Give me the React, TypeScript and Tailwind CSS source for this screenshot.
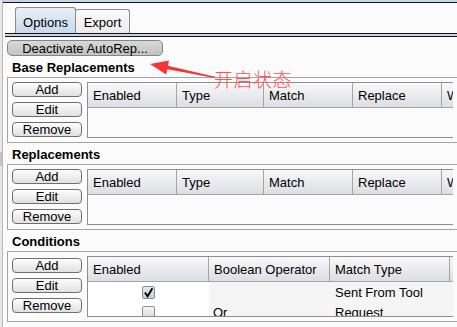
import React from "react";

function Btn({ label }: { label: string }) {
  return (
    <div className="h-[15px] w-[70px] shrink-0 rounded-[4px] border border-[#6f6f6f] bg-gradient-to-b from-[#fefefe] to-[#e0e0e0] flex items-center justify-center text-[13px] leading-none text-black">
      {label}
    </div>
  );
}

function ButtonCol() {
  return (
    <div className="flex flex-col gap-[5px] w-[70px] shrink-0">
      <Btn label="Add" />
      <Btn label="Edit" />
      <Btn label="Remove" />
    </div>
  );
}

function HCell({ w, children }: { w: string; children: React.ReactNode }) {
  return (
    <div className={`${w} shrink-0 border-r border-[#a3a3a8] pl-[5px] flex items-center whitespace-nowrap text-[13px] leading-none`}>
      {children}
    </div>
  );
}

function ReplTable() {
  return (
    <div className="flex-1 min-w-0 h-[56px] flex flex-col border border-r-0 border-[#8e8e8e] overflow-hidden">
      <div className="h-[25px] shrink-0 flex border-b border-[#a3a3a8] bg-gradient-to-b from-[#f8f8fa] to-[#dddee3]">
        <HCell w="w-[89px]">Enabled</HCell>
        <HCell w="w-[87px]">Type</HCell>
        <HCell w="w-[89px]">Match</HCell>
        <HCell w="w-[89px]">Replace</HCell>
        <div className="flex-1 pl-[5px] flex items-center whitespace-nowrap text-[13px] leading-none">Which</div>
      </div>
      <div className="flex-1 bg-[#fbfbfb]" />
    </div>
  );
}

function CheckBox({ checked }: { checked: boolean }) {
  return (
    <div
      className={`w-[13px] h-[13px] rounded-[2px] border border-[#8a8f96] flex items-center justify-center ${
        checked ? "bg-gradient-to-b from-[#e4ebf2] to-[#c2cfdc]" : "bg-gradient-to-b from-[#f6f6f6] to-[#dadada]"
      }`}
    >
      {checked && (
        <svg width="11" height="11" viewBox="0 0 11 11">
          <path d="M2 5.5 L4.6 9.2 L9.4 1.2" fill="none" stroke="#000" strokeWidth="1.9" strokeLinejoin="miter" />
        </svg>
      )}
    </div>
  );
}

function CondTable() {
  return (
    <div className="flex-1 min-w-0 h-[61px] flex flex-col border border-r-0 border-[#8e8e8e] overflow-hidden">
      <div className="h-[25px] shrink-0 flex border-b border-[#a3a3a8] bg-gradient-to-b from-[#f8f8fa] to-[#dddee3]">
        <HCell w="w-[121px]">Enabled</HCell>
        <HCell w="w-[121px]">Boolean Operator</HCell>
        <HCell w="w-[120px]">Match Type</HCell>
        <div className="flex-1 pl-[5px] flex items-center whitespace-nowrap text-[13px] leading-none">Match Relationship</div>
      </div>
      <div className="flex-1 flex flex-col overflow-hidden text-[13px] leading-none">
        <div className="h-[20px] shrink-0 flex">
          <div className="w-[121px] shrink-0 bg-white flex items-center justify-center">
            <CheckBox checked />
          </div>
          <div className="w-[121px] shrink-0 bg-[#f5f5f5] pl-[4px] flex items-center" />
          <div className="w-[120px] shrink-0 bg-[#f5f5f5] pl-[5px] flex items-center whitespace-nowrap">Sent From Tool</div>
          <div className="flex-1 bg-[#f5f5f5] pl-[5px] flex items-center whitespace-nowrap">Matches</div>
        </div>
        <div className="h-[20px] shrink-0 flex">
          <div className="w-[121px] shrink-0 bg-white flex items-center justify-center">
            <CheckBox checked={false} />
          </div>
          <div className="w-[121px] shrink-0 bg-[#f5f5f5] pl-[4px] flex items-center">Or</div>
          <div className="w-[120px] shrink-0 bg-[#f5f5f5] pl-[5px] flex items-center whitespace-nowrap">Request</div>
          <div className="flex-1 bg-[#f5f5f5] pl-[5px] flex items-center whitespace-nowrap">Contains</div>
        </div>
      </div>
    </div>
  );
}

function Label({ children }: { children: React.ReactNode }) {
  return (
    <div className="h-[21px] shrink-0 pl-[5px] pt-[4px] text-[13px] leading-[15px] font-bold whitespace-nowrap">
      {children}
    </div>
  );
}

export default function App() {
  return (
    <div className="relative w-[457px] h-[327px] overflow-hidden bg-[#fbfbfb] flex font-['Liberation_Sans',Arial,sans-serif] text-black">
      {/* left strip */}
      <div className="w-[2px] shrink-0 bg-[#e8e8e8] flex flex-col">
        <div className="h-[152px]" />
        <div className="h-[14px] bg-[#c4c4c4]" />
      </div>
      <div className="w-px shrink-0 bg-[#b8b8b8]" />

      <div className="flex-1 min-w-0 flex flex-col">
        <div className="h-[2px] shrink-0 bg-[#c5d6ea]" />
        <div className="h-px shrink-0 bg-[#111]" />

        {/* tabs */}
        <div className="h-[30px] shrink-0 flex items-end pl-[12px]">
          <div className="w-[61px] h-[26px] rounded-t-[3px] border border-b-0 border-[#898c95] bg-gradient-to-b from-[#e8eff8] to-[#c8d9ec] flex justify-center items-center pt-[3px] text-[13px] leading-none">
            Options
          </div>
          <div className="-ml-px w-[55px] h-[24px] rounded-t-[3px] border border-b-0 border-[#898c95] bg-gradient-to-b from-[#fbfbfb] to-[#ebebeb] flex justify-center items-center pt-[1px] text-[13px] leading-none">
            Export
          </div>
        </div>

        <div className="ml-[2px] h-px shrink-0 bg-[#111]" />
        <div className="ml-[2px] h-[2px] shrink-0 bg-[#c5d6ea]" />
        <div className="ml-[2px] h-px shrink-0 bg-[#111]" />

        <div className="pl-[4px] pt-[3px] flex flex-col">
          <div className="w-[156px] h-[16px] shrink-0 rounded-[5px] border border-[#858585] bg-gradient-to-b from-[#d8d8d8] to-[#c2c2c2] flex items-center justify-center text-[13px] leading-none whitespace-nowrap">
            Deactivate AutoRep...
          </div>

          <Label>Base Replacements</Label>
          <div className="flex gap-[5px] border border-r-0 border-[#a3a3a3] p-[4px]">
            <ButtonCol />
            <ReplTable />
          </div>

          <Label>Replacements</Label>
          <div className="flex gap-[5px] border border-r-0 border-[#a3a3a3] p-[4px]">
            <ButtonCol />
            <ReplTable />
          </div>

          <Label>Conditions</Label>
          <div className="flex gap-[5px] border border-r-0 border-[#a3a3a3] p-[4px]">
            <div className="mt-[2px] self-start">
              <ButtonCol />
            </div>
            <CondTable />
          </div>
        </div>
      </div>

      {/* annotation arrow */}
      <svg className="absolute left-0 top-0 pointer-events-none" width="457" height="327" viewBox="0 0 457 327">
        <polygon
          points="150,64 169,60.6 167.9,65.8 215,76.8 214.8,77.9 167.3,69.3 166.2,74.4"
          fill="#f53535"
        />
      </svg>
      <div className="absolute left-[214px] top-[69px] text-[19px] leading-none tracking-[0.5px] text-[#ff5252] font-light font-['Noto_Sans_CJK_SC',sans-serif] whitespace-nowrap">
        开启状态
      </div>
    </div>
  );
}
